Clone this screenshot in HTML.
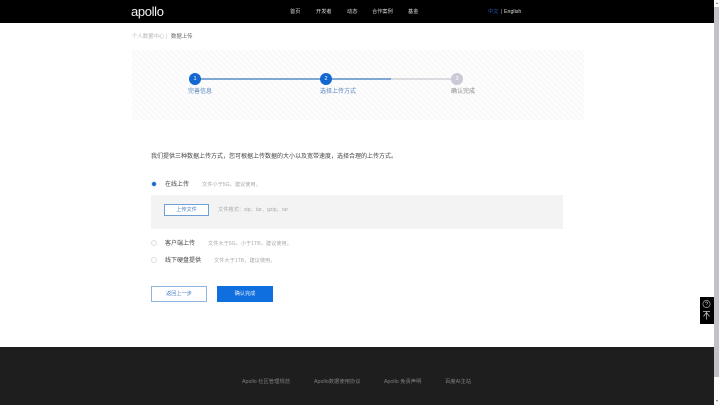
<!DOCTYPE html>
<html lang="zh">
<head>
<meta charset="utf-8">
<style>
html,body{margin:0;padding:0;background:#fff;}
body{width:720px;height:405px;position:relative;overflow:hidden;font-family:"Liberation Sans","Noto Sans CJK SC",sans-serif;}
.a{position:absolute;white-space:nowrap;line-height:1;}
.hd{position:absolute;left:0;top:0;width:720px;height:22.5px;background:#000;}
.nav{color:#d8d8d8;font-size:5.2px;top:9.5px;}
.sb{position:absolute;left:714px;top:0;width:6px;height:405px;background:#fcfcfc;}
.sb i{position:absolute;left:0;top:7px;width:5px;height:370px;background:#c2c2c6;}
.sb b{position:absolute;left:1.5px;width:0;height:0;border-left:1.5px solid transparent;border-right:1.5px solid transparent;}
.band{position:absolute;left:132px;top:50px;width:452px;height:70px;background:repeating-linear-gradient(45deg,#f8f8f9 0,#f8f8f9 1.5px,#fdfdfd 1.5px,#fdfdfd 4px);}
.dot{position:absolute;width:12px;height:12px;border-radius:50%;color:#fff;font-size:5.5px;line-height:12px;text-align:center;top:73px;}
.ln{position:absolute;height:1.5px;top:78.2px;}
.st{font-size:6px;top:88.5px;}
.r{position:absolute;left:151px;width:6px;height:6px;border-radius:50%;box-sizing:border-box;}
.t{font-size:6px;color:#444;}
.s{font-size:5.2px;color:#aaa;}
.ft{position:absolute;left:0;top:347px;width:720px;height:58px;background:#1e1e1e;}
.fl{color:#7f7f7f;font-size:5.3px;top:379.5px;}
</style>
</head>
<body>
<div class="hd"></div>
<div class="a" style="left:131px;top:5px;color:#f2f2f2;font-size:13px;letter-spacing:-.35px;font-weight:400;">apollo</div>
<div class="a nav" style="left:290px;">首页</div>
<div class="a nav" style="left:316px;">开发者</div>
<div class="a nav" style="left:347px;">动态</div>
<div class="a nav" style="left:372px;">合作案例</div>
<div class="a nav" style="left:408px;">基金</div>
<div class="a" style="left:488px;top:9.5px;font-size:5.3px;color:#2a4fb0;">中文</div>
<div class="a" style="left:501px;top:9.5px;font-size:5.3px;color:#bbb;">|</div>
<div class="a" style="left:504px;top:9.5px;font-size:5.3px;color:#ddd;">English</div>

<div class="a" style="left:132px;top:34.5px;font-size:5.4px;color:#b5b5b5;">个人数据中心</div>
<div class="a" style="left:166px;top:34.5px;font-size:5.4px;color:#b5b5b5;">|</div>
<div class="a" style="left:171px;top:34.5px;font-size:5.4px;color:#666;">数据上传</div>

<div class="band"></div>
<div class="ln" style="left:195px;width:196px;background:#7fa8d4;"></div>
<div class="ln" style="left:391px;width:66px;background:#dcdce0;"></div>
<div class="dot" style="left:189px;background:#1268d0;">1</div>
<div class="dot" style="left:320px;background:#1268d0;">2</div>
<div class="dot" style="left:451px;background:#c9cad6;">3</div>
<div class="a st" style="left:188px;color:#5a86c0;">完善信息</div>
<div class="a st" style="left:320px;color:#5a86c0;">选择上传方式</div>
<div class="a st" style="left:451px;color:#888;">确认完成</div>

<div class="a" style="left:151px;top:154px;font-size:6px;color:#444;">我们提供三种数据上传方式，您可根据上传数据的大小以及宽带速度，选择合理的上传方式。</div>

<div class="r" style="top:181px;background:#dbe8f8;"></div>
<div style="position:absolute;left:151.8px;top:181.8px;width:4.4px;height:4.4px;border-radius:50%;background:#1268d0;"></div>
<div class="a t" style="left:165px;top:182px;">在线上传</div>
<div class="a s" style="left:202px;top:183px;">文件小于5G，建议使用。</div>

<div style="position:absolute;left:151px;top:195px;width:412px;height:34px;background:#f3f3f4;"></div>
<div style="position:absolute;left:164px;top:204px;width:45px;height:12px;box-sizing:border-box;background:#fff;border:1px solid #6f9fd6;color:#4a80c4;font-size:5.2px;line-height:11px;text-align:center;">上传文件</div>
<div class="a s" style="left:218px;top:208px;">文件格式：zip、tar、gzip、rar</div>

<div class="r" style="top:240px;border:1px solid #dedede;background:#fff;"></div>
<div class="a t" style="left:165px;top:241px;">客户端上传</div>
<div class="a s" style="left:208px;top:241.5px;">文件大于5G，小于1TB，建议使用。</div>

<div class="r" style="top:257px;border:1px solid #dedede;background:#fff;"></div>
<div class="a t" style="left:165px;top:258px;">线下硬盘提供</div>
<div class="a s" style="left:214px;top:258.5px;">文件大于1TB，建议使用。</div>

<div style="position:absolute;left:151px;top:286px;width:56px;height:16px;box-sizing:border-box;background:#fff;border:1px solid #8fb4de;color:#4a80c4;font-size:5.2px;line-height:15px;text-align:center;">返回上一步</div>
<div style="position:absolute;left:217px;top:286px;width:56px;height:16px;background:#0f6fde;color:#e8f0fb;font-size:5.2px;line-height:17px;text-align:center;">确认完成</div>

<div style="position:absolute;left:700px;top:297px;width:13.5px;height:27px;background:#000;"></div>
<svg style="position:absolute;left:700px;top:297px;" width="13" height="27" viewBox="0 0 13 27">
<circle cx="6.5" cy="7" r="3.6" fill="none" stroke="#aaa" stroke-width=".7"/>
<path d="M5.4 6c.1-1.4 2.3-1.4 2.3 0 0 .9-1.1.9-1.1 1.9M6.6 9v.2" fill="none" stroke="#bbb" stroke-width=".6"/>
<path d="M3 14.5h7M6.5 14.5v8M6.5 15.5l-3 4M6.5 15.5l3 4" fill="none" stroke="#ccc" stroke-width=".7"/>
</svg>

<div class="ft"></div>
<div class="a fl" style="left:242px;">Apollo 社区管理规范</div>
<div class="a fl" style="left:314px;">Apollo数据使用协议</div>
<div class="a fl" style="left:384px;">Apollo 免责声明</div>
<div class="a fl" style="left:445px;">百度AI主站</div>

<div class="sb"><b style="top:2px;border-bottom:2px solid #777;"></b><i></i><b style="top:400px;border-top:2px solid #777;"></b></div>
</body>
</html>
